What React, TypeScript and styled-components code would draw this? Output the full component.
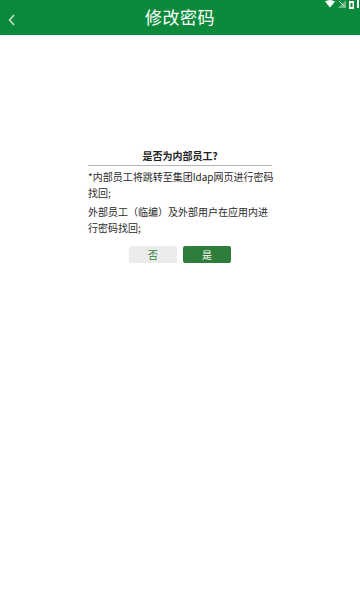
import React from "react";
import styled, { createGlobalStyle } from "styled-components";

const Global = createGlobalStyle`
  html, body { margin: 0; padding: 0; background: #fff; }
  body { font-family: "Noto Sans CJK SC", "Noto Sans", sans-serif; }
`;

const Page = styled.div`
  width: 360px;
  height: 600px;
  background: #fff;
  display: flex;
  flex-direction: column;
`;

const Header = styled.header`
  position: relative;
  height: 35px;
  background: #0b8a3c;
  display: flex;
  align-items: center;
  justify-content: center;
  flex-shrink: 0;
`;

const Back = styled.button`
  position: absolute;
  left: 4px;
  top: 10px;
  width: 16px;
  height: 20px;
  padding: 0;
  border: none;
  background: transparent;
  display: flex;
  align-items: center;
  justify-content: center;
`;

const Title = styled.h1`
  margin: 0;
  color: #fff;
  font-size: 17px;
  font-weight: 400;
  letter-spacing: 0.5px;
  line-height: 20px;
  margin-top: -1px;
`;

const Status = styled.div`
  position: absolute;
  right: 0;
  top: 0;
  display: flex;
  gap: 3px;
  align-items: flex-start;
`;

const Body = styled.main`
  display: flex;
  flex-direction: column;
  align-items: center;
  padding-top: 114px;
`;

const Dialog = styled.section`
  width: 184px;
  display: flex;
  flex-direction: column;
`;

const DTitle = styled.div`
  text-align: center;
  font-size: 10px;
  font-weight: 700;
  color: #222;
  line-height: 14px;
  padding-bottom: 2px;
  border-bottom: 1px solid #b5b5b5;
`;

const Para = styled.p`
  margin: 3px 0 0;
  margin-right: -4px;
  font-size: 10px;
  line-height: 16px;
  color: #2a2a2a;
`;

const Buttons = styled.div`
  display: flex;
  justify-content: center;
  gap: 6px;
  margin-top: 10px;
`;

const Btn = styled.button<{ $primary?: boolean }>`
  width: 48px;
  height: 17px;
  padding: 0;
  border: none;
  border-radius: 2px;
  font-family: inherit;
  font-size: 10px;
  line-height: 17px;
  background: ${(p) => (p.$primary ? "#2e7d3a" : "#ececec")};
  color: ${(p) => (p.$primary ? "#fff" : "#2e7d3a")};
`;

export default function App() {
  return (
    <Page>
      <Global />
      <Header>
        <Back aria-label="返回">
          <svg width="8" height="12" viewBox="0 0 8 12">
            <path d="M6 1 L1.5 6 L6 11" stroke="#cfe9d6" strokeWidth="1.4" fill="none" />
          </svg>
        </Back>
        <Title>修改密码</Title>
        <Status>
          <svg width="10" height="8" viewBox="0 0 10 8">
            <path d="M0 1.5 Q5 -1.5 10 1.5 L5 7.5 Z" fill="#fff" />
          </svg>
          <svg width="8" height="8" viewBox="0 0 8 8">
            <path d="M0 8 L8 0 L8 8 Z" fill="#6fb784" />
            <path d="M1 1 L7 7" stroke="#cfe6d6" strokeWidth="1" />
          </svg>
          <svg width="5" height="9" viewBox="0 0 5 9">
            <rect x="0" y="1" width="5" height="8" fill="#fff" />
            <rect x="1.5" y="3" width="2" height="4" fill="#0b8a3c" />
          </svg>
          <svg width="3" height="8" viewBox="0 0 3 8">
            <rect x="0" y="0" width="2" height="8" fill="#fff" />
          </svg>
        </Status>
      </Header>
      <Body>
        <Dialog>
          <DTitle>是否为内部员工?</DTitle>
          <Para>*内部员工将跳转至集团ldap网页进行密码找回;</Para>
          <Para>外部员工（临编）及外部用户在应用内进行密码找回;</Para>
          <Buttons>
            <Btn>否</Btn>
            <Btn $primary>是</Btn>
          </Buttons>
        </Dialog>
      </Body>
    </Page>
  );
}
